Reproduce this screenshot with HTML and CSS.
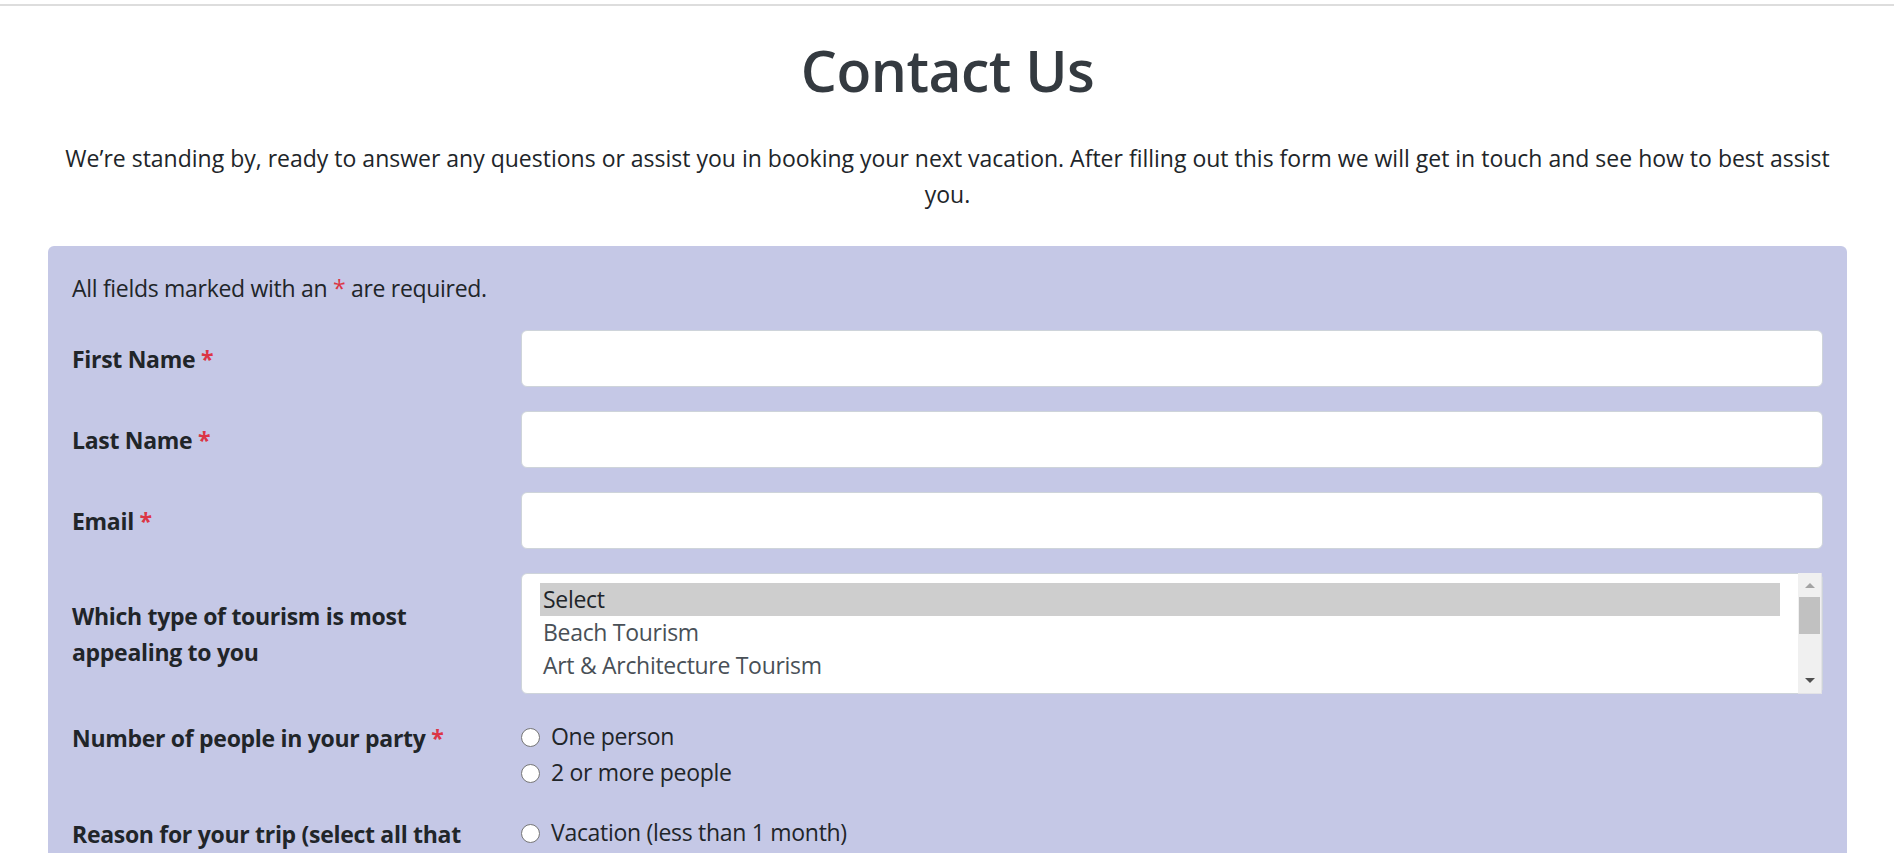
FILE: index.html
```html
<!DOCTYPE html>
<html lang="en">
<head>
<meta charset="utf-8">
<title>Contact Us</title>
<link rel="stylesheet" href="styles.css">
</head>
<body>
<div class="topline"></div>
<main class="container">
  <h1 class="title">Contact Us</h1>
  <p class="intro">We’re standing by, ready to answer any questions or assist you in booking your next vacation. After filling out this form we will get in touch and see how to best assist you.</p>
  <form class="form-box">
    <p class="note">All fields marked with an <span class="req-light">*</span> are required.</p>

    <div class="form-row">
      <label class="label-col" for="fname">First Name <span class="req">*</span></label>
      <div class="field-col"><input class="text-input" id="fname" type="text"></div>
    </div>

    <div class="form-row">
      <label class="label-col" for="lname">Last Name <span class="req">*</span></label>
      <div class="field-col"><input class="text-input" id="lname" type="text"></div>
    </div>

    <div class="form-row">
      <label class="label-col" for="email">Email <span class="req">*</span></label>
      <div class="field-col"><input class="text-input" id="email" type="email"></div>
    </div>

    <div class="form-row">
      <div class="label-col">Which type of tourism is most appealing to you</div>
      <div class="field-col">
        <div class="listbox" role="listbox">
          <div class="options">
            <div class="opt selected" role="option">Select</div>
            <div class="opt" role="option">Beach Tourism</div>
            <div class="opt" role="option">Art &amp; Architecture Tourism</div>
          </div>
          <div class="scrollbar">
            <span class="arrow up"></span>
            <span class="thumb"></span>
            <span class="track"></span>
            <span class="arrow down"></span>
          </div>
        </div>
      </div>
    </div>

    <div class="form-row top">
      <div class="label-col pad">Number of people in your party <span class="req">*</span></div>
      <div class="field-col">
        <label class="check"><input type="radio" name="party"><span>One person</span></label>
        <label class="check"><input type="radio" name="party"><span>2 or more people</span></label>
      </div>
    </div>

    <div class="form-row top">
      <div class="label-col pad">Reason for your trip (select all that apply)</div>
      <div class="field-col">
        <label class="check"><input type="radio" name="reason"><span>Vacation (less than 1 month)</span></label>
        <label class="check"><input type="radio" name="reason"><span>Extended stay (more than 1 month)</span></label>
        <label class="check"><input type="radio" name="reason"><span>Business</span></label>
      </div>
    </div>
  </form>
</main>
</body>
</html>
```

FILE: styles.css
```css
* { box-sizing: border-box; }

html, body {
  margin: 0;
  padding: 0;
  background: #ffffff;
}

body {
  font-family: "Open Sans", "Noto Sans", "Liberation Sans", sans-serif;
  font-size: 23px;
  letter-spacing: -0.3px;
  line-height: 36px;
  color: #212529;
}

.topline {
  height: 2px;
  margin-top: 4px;
  background: #dddddd;
}

.container {
  padding: 0 47px 0 48px;
}

.title {
  margin: 28px 0 34px;
  font-size: 57px;
  line-height: 72px;
  font-weight: 600;
  letter-spacing: -0.5px;
  color: #343a40;
  text-align: center;
}

.intro {
  margin: 0 0 34px;
  letter-spacing: 0;
  text-align: center;
}

.form-box {
  background: #c5c8e6;
  border-radius: 6px;
  padding: 24px 24px 40px;
}

.note {
  margin: 0 0 24px;
}

.req-light { color: #dc3545; }
.req { color: #dc3545; }

.form-row {
  display: flex;
  align-items: center;
  margin: 0 -22.5px 24px;
}

.form-row.top { align-items: flex-start; }

.label-col {
  flex: 0 0 25%;
  padding: 0 22.5px;
  font-weight: 700;
}

.label-col.pad { padding-top: 2px; }

.field-col {
  flex: 0 0 75%;
  padding: 0 22.5px;
}

.text-input {
  display: block;
  width: 100%;
  height: 57px;
  margin: 0;
  border: 1px solid #ced4da;
  border-radius: 6px;
  background: #ffffff;
  font: inherit;
}

.listbox {
  display: flex;
  height: 121px;
  border: 1px solid #ced4da;
  border-radius: 6px;
  background: #ffffff;
}

.options {
  flex: 1;
  padding: 9px 18px;
}

.opt {
  height: 33px;
  line-height: 33px;
  padding: 0 3px;
  color: #495057;
  white-space: nowrap;
}

.opt.selected {
  background: #cecece;
  color: #212529;
}

.scrollbar {
  flex: 0 0 24px;
  display: flex;
  flex-direction: column;
  align-items: center;
  background: #f0f0f0;
  margin: -1px 0 -1px 0;
  border-right: 1px solid #e3e3e6;
  border-bottom: 1px solid #e3e3e6;
}

.arrow {
  width: 0;
  height: 0;
  border-left: 5px solid transparent;
  border-right: 5px solid transparent;
}

.arrow.up {
  margin-top: 10px;
  border-bottom: 5px solid #a3a3a3;
}

.arrow.down {
  margin-bottom: 10px;
  border-top: 5px solid #505050;
}

.thumb {
  width: 21px;
  height: 37px;
  margin-top: 9px;
  background: #c1c1c1;
}

.track { flex: 1; }

.check {
  display: flex;
  align-items: flex-start;
  line-height: 36px;
}

.check input {
  appearance: none;
  -webkit-appearance: none;
  flex: 0 0 19px;
  width: 19px;
  height: 19px;
  margin: 10px 11px 0 0;
  border: 1px solid #767676;
  border-radius: 50%;
  background: #ffffff;
}
```
